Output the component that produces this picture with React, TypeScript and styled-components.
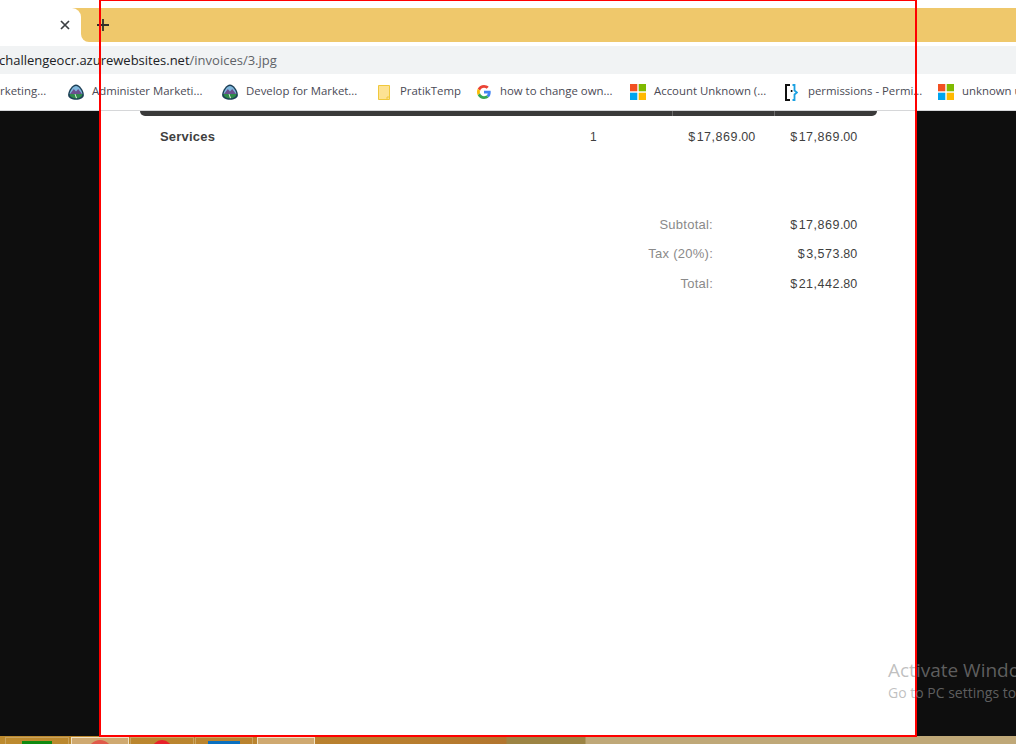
import styled, { createGlobalStyle } from 'styled-components';

const GlobalStyle = createGlobalStyle`
  html, body { margin: 0; padding: 0; background: #fff; }
  body { font-family: "Open Sans", "Liberation Sans", sans-serif; }
`;

const Screen = styled.div`
  position: relative;
  width: 1016px;
  height: 744px;
  overflow: hidden;
  display: flex;
  flex-direction: column;
  background: #fff;
`;

const TabStrip = styled.div`
  margin-top: 8px;
  height: 34px;
  display: flex;
  background: linear-gradient(#efc86b 50%, #fff 50%);
`;

const ActiveTab = styled.div`
  width: 81px;
  display: flex;
  align-items: center;
  justify-content: flex-end;
  padding-right: 11px;
  box-sizing: border-box;
  border-top-right-radius: 9px;
  background: #fff;
  color: #3c4043;
`;

const TabRest = styled.div`
  flex: 1;
  display: flex;
  align-items: center;
  padding-left: 16px;
  background: #efc86b;
  border-bottom-left-radius: 8px;
  color: #32302a;
`;

const AddressBar = styled.div`
  margin-top: 4px;
  height: 28px;
  background: #f1f3f4;
  display: flex;
  align-items: center;
  overflow: hidden;
  font-size: 13px;
  white-space: nowrap;
  color: #202124;
`;

const UrlText = styled.span`
  margin: -1px 0 0 -1px;
`;

const UrlPath = styled.span`
  color: #5f6368;
`;

const BookmarkBar = styled.div`
  height: 37px;
  box-sizing: border-box;
  border-bottom: 1px solid #d6d7d9;
  background: #fff;
  display: flex;
  align-items: center;
  overflow: hidden;
  white-space: nowrap;
  font-size: 11.4px;
  color: #4a4a55;
`;

const Bookmark = styled.div<{ $width: number; $gap?: number }>`
  flex: none;
  width: ${(p) => p.$width}px;
  display: flex;
  align-items: center;
  gap: ${(p) => p.$gap ?? 8}px;

  svg {
    flex: none;
  }
`;

const BookmarkLabel = styled.span`
  line-height: 16px;
  margin-bottom: 2px;
`;

const Viewport = styled.main`
  flex: 1;
  display: flex;
  justify-content: center;
  background: #0e0e0e;
  min-height: 0;
`;

const InvoicePage = styled.div`
  width: 814px;
  height: 625px;
  box-sizing: border-box;
  padding: 0 38px 0 39px;
  background: #fff;
  font-family: "Liberation Sans", Arial, sans-serif;
  color: #3f3f3f;
`;

const TableHead = styled.div`
  height: 5px;
  display: grid;
  grid-template-columns: 532px 102px 1fr;
  background: #3a3a3a;
  border-radius: 0 0 5px 5px;
`;

const HeadCell = styled.div`
  & + & {
    border-left: 1px solid #6a6a6a;
  }
`;

const ItemRow = styled.div`
  display: grid;
  grid-template-columns: 430px 83px 82px 102px;
  padding: 11px 20px 0;
  height: 18px;
  align-items: center;
  font-size: 12.5px;
`;

const ItemName = styled.strong`
  font-size: 13px;
  font-weight: 700;
  letter-spacing: 0.2px;
`;

const ItemCount = styled.span`
  font-size: 12px;
  padding-top: 1px;
`;

const Money = styled.span`
  text-align: right;
  font-size: 12.5px;
  letter-spacing: 0.5px;
  padding-top: 1px;
`;

const Currency = styled.span`
  letter-spacing: 1.5px;
`;

const Cents = styled.span`
  letter-spacing: -0.1px;
`;

const Totals = styled.div`
  margin-top: 70px;
  display: flex;
  flex-direction: column;
  gap: 11.5px;
  padding-right: 20px;
`;

const TotalRow = styled.div`
  display: grid;
  grid-template-columns: 1fr 144px;
  height: 18px;
  align-items: center;
`;

const TotalLabel = styled.span`
  text-align: right;
  color: #8a8a8a;
  font-size: 13px;
  letter-spacing: 0.25px;
`;

const Taskbar = styled.footer`
  height: 8px;
  display: flex;
  padding-left: 5px;
  background: linear-gradient(
    90deg,
    #bc8a2e 0,
    #b87e2e 406px,
    #b2752e 506px,
    #9c8444 507px,
    #9c8444 585px,
    #bfa878 586px,
    #bfa878 100%
  );
`;

const TaskSlot = styled.div<{ $width: number; $gap: number; $active?: boolean }>`
  flex: none;
  box-sizing: border-box;
  width: ${(p) => p.$width}px;
  margin: 1px ${(p) => p.$gap}px 0 0;
  display: flex;
  justify-content: center;
  overflow: hidden;
  border: 1px solid ${(p) => (p.$active ? '#f0e2c4' : '#c9a35e')};
  border-bottom: 0;
  background: ${(p) => (p.$active ? '#cfa970' : 'transparent')};
`;

const TaskIcon = styled.div<{ $width: number; $color: string; $round?: boolean }>`
  width: ${(p) => p.$width}px;
  height: ${(p) => (p.$round ? p.$width : 16)}px;
  margin-top: ${(p) => (p.$round ? 2 : 3)}px;
  background: ${(p) => p.$color};
  border-radius: ${(p) => (p.$round ? '50%' : '0')};
`;

const RedFrame = styled.div`
  position: absolute;
  left: 99px;
  top: -1px;
  width: 818px;
  height: 738px;
  box-sizing: border-box;
  border: 2px solid #ff0000;
  pointer-events: none;
`;

const Watermark = styled.div`
  position: absolute;
  left: 888px;
  top: 658px;
  white-space: nowrap;
  color: rgba(150, 150, 150, 0.6);
  font-family: "Open Sans", sans-serif;
`;

const WatermarkTitle = styled.div`
  font-size: 19px;
  line-height: 24px;
`;

const WatermarkSub = styled.div`
  font-size: 14px;
  line-height: 21px;
`;

const PeakIcon = () => (
  <svg width="16" height="16" viewBox="0 0 16 16">
    <path d="M8 .5 C11.5 .5 15.7 6 15.9 11 C16 14 12 15.8 8 15.8 C4 15.8 0 14 .1 11 C.3 6 4.5 .5 8 .5Z" fill="#1d3f56" />
    <path d="M8 2 C10.8 2 14 6.5 14.4 10 L1.6 10 C2 6.5 5.2 2 8 2Z" fill="#7fb7dc" />
    <path d="M2 10 L5.8 5 L8 7.6 L10.2 5 L14 10Z" fill="#6b4f8f" />
    <path d="M1.6 10 H14.4 C14.4 13 11 14.4 8 14.4 C5 14.4 1.6 13 1.6 10Z" fill="#2f8a4a" />
    <path d="M7.4 10 L9 14 L8 14.3 L6.6 10Z" fill="#e8f0ea" />
  </svg>
);

const NoteIcon = () => (
  <svg width="12" height="15" viewBox="0 0 12 15">
    <path d="M.5.5 H11.5 V14.5 H.5Z" fill="#fde293" stroke="#f0c83c" />
    <path d="M9 14.5 V12 H11.5" fill="none" stroke="#f0c83c" />
  </svg>
);

const GoogleIcon = () => (
  <svg width="14" height="14" viewBox="0 0 48 48">
    <path fill="#EA4335" d="M24 9.5c3.5 0 6.7 1.2 9.2 3.6l6.9-6.9C35.9 2.4 30.5 0 24 0 14.6 0 6.5 5.4 2.6 13.2l8 6.2C12.5 13.7 17.8 9.5 24 9.5z" />
    <path fill="#4285F4" d="M47 24.5c0-1.6-.1-3.1-.4-4.5H24v9h12.9c-.6 3-2.2 5.5-4.7 7.2l7.7 6c4.5-4.2 7.1-10.3 7.1-17.7z" />
    <path fill="#FBBC05" d="M10.5 28.6c-.5-1.4-.8-3-.8-4.6s.3-3.2.8-4.6l-8-6.2C.9 16.5 0 20.1 0 24s.9 7.5 2.6 10.8l7.9-6.2z" />
    <path fill="#34A853" d="M24 48c6.5 0 11.9-2.1 15.9-5.8l-7.7-6c-2.2 1.4-4.9 2.3-8.2 2.3-6.2 0-11.5-4.2-13.4-9.9l-8 6.2C6.5 42.6 14.6 48 24 48z" />
  </svg>
);

const MicrosoftIcon = () => (
  <svg width="16" height="16" viewBox="0 0 16 16">
    <rect width="7.3" height="7.3" fill="#f25022" />
    <rect x="8.7" width="7.3" height="7.3" fill="#7fba00" />
    <rect y="8.7" width="7.3" height="7.3" fill="#00a4ef" />
    <rect x="8.7" y="8.7" width="7.3" height="7.3" fill="#ffb900" />
  </svg>
);

const DocsIcon = () => (
  <svg width="13" height="17" viewBox="0 0 13 17" fill="none">
    <path d="M5 1 H1 V16 H5" stroke="#111" strokeWidth="2" />
    <path d="M7.5 1 H9.5 V6.5 L12 8.5 L9.5 10.5 V16 H7.5" stroke="#1ba1e2" strokeWidth="1.8" />
    <rect x="5.8" y="6" width="1.6" height="2" fill="#111" />
  </svg>
);

const CloseIcon = () => (
  <svg width="10" height="10" viewBox="0 0 10 10" stroke="currentColor" strokeWidth="1.7">
    <path d="M1 1 L9 9 M9 1 L1 9" />
  </svg>
);

const PlusIcon = () => (
  <svg width="12" height="12" viewBox="0 0 12 12" stroke="currentColor" strokeWidth="1.8">
    <path d="M6 0 V12 M0 6 H12" />
  </svg>
);

const Amount = ({ value }: { value: string }) => {
  const [whole, cents] = value.slice(1).split('.');
  return (
    <Money>
      <Currency>$</Currency>
      {whole}
      <Cents>.{cents}</Cents>
    </Money>
  );
};

const bookmarks = [
  { label: 'rketing...', icon: null, width: 68 },
  { label: 'Administer Marketi...', icon: <PeakIcon />, width: 154 },
  { label: 'Develop for Market...', icon: <PeakIcon />, width: 156 },
  { label: 'PratikTemp', icon: <NoteIcon />, width: 99, gap: 10 },
  { label: 'how to change own...', icon: <GoogleIcon />, width: 153, gap: 9 },
  { label: 'Account Unknown (...', icon: <MicrosoftIcon />, width: 155 },
  { label: 'permissions - Permi...', icon: <DocsIcon />, width: 153, gap: 10 },
  { label: 'unknown u', icon: <MicrosoftIcon />, width: 90 },
];

const totals = [
  { label: 'Subtotal:', value: '$17,869.00' },
  { label: 'Tax (20%):', value: '$3,573.80' },
  { label: 'Total:', value: '$21,442.80' },
];

export default function App() {
  return (
    <Screen>
      <GlobalStyle />
      <TabStrip>
        <ActiveTab>
          <CloseIcon />
        </ActiveTab>
        <TabRest>
          <PlusIcon />
        </TabRest>
      </TabStrip>
      <AddressBar>
        <UrlText>
          challengeocr.azurewebsites.net<UrlPath>/invoices/3.jpg</UrlPath>
        </UrlText>
      </AddressBar>
      <BookmarkBar>
        {bookmarks.map((b) => (
          <Bookmark key={b.label} $width={b.width} $gap={b.gap}>
            {b.icon}
            <BookmarkLabel>{b.label}</BookmarkLabel>
          </Bookmark>
        ))}
      </BookmarkBar>
      <Viewport>
        <InvoicePage>
          <TableHead>
            <HeadCell />
            <HeadCell />
            <HeadCell />
          </TableHead>
          <ItemRow>
            <ItemName>Services</ItemName>
            <ItemCount>1</ItemCount>
            <Amount value="$17,869.00" />
            <Amount value="$17,869.00" />
          </ItemRow>
          <Totals>
            {totals.map((t) => (
              <TotalRow key={t.label}>
                <TotalLabel>{t.label}</TotalLabel>
                <Amount value={t.value} />
              </TotalRow>
            ))}
          </Totals>
        </InvoicePage>
      </Viewport>
      <Taskbar>
        <TaskSlot $width={64} $gap={2}>
          <TaskIcon $width={30} $color="#0f8a10" />
        </TaskSlot>
        <TaskSlot $width={58} $gap={1} $active>
          <TaskIcon $width={24} $color="#e05a4a" $round />
        </TaskSlot>
        <TaskSlot $width={64} $gap={1}>
          <TaskIcon $width={20} $color="#e8202a" $round />
        </TaskSlot>
        <TaskSlot $width={58} $gap={4}>
          <TaskIcon $width={32} $color="#0a70c0" />
        </TaskSlot>
        <TaskSlot $width={58} $gap={0} $active />
      </Taskbar>
      <RedFrame />
      <Watermark>
        <WatermarkTitle>Activate Windows</WatermarkTitle>
        <WatermarkSub>Go to PC settings to activate Windows.</WatermarkSub>
      </Watermark>
    </Screen>
  );
}
